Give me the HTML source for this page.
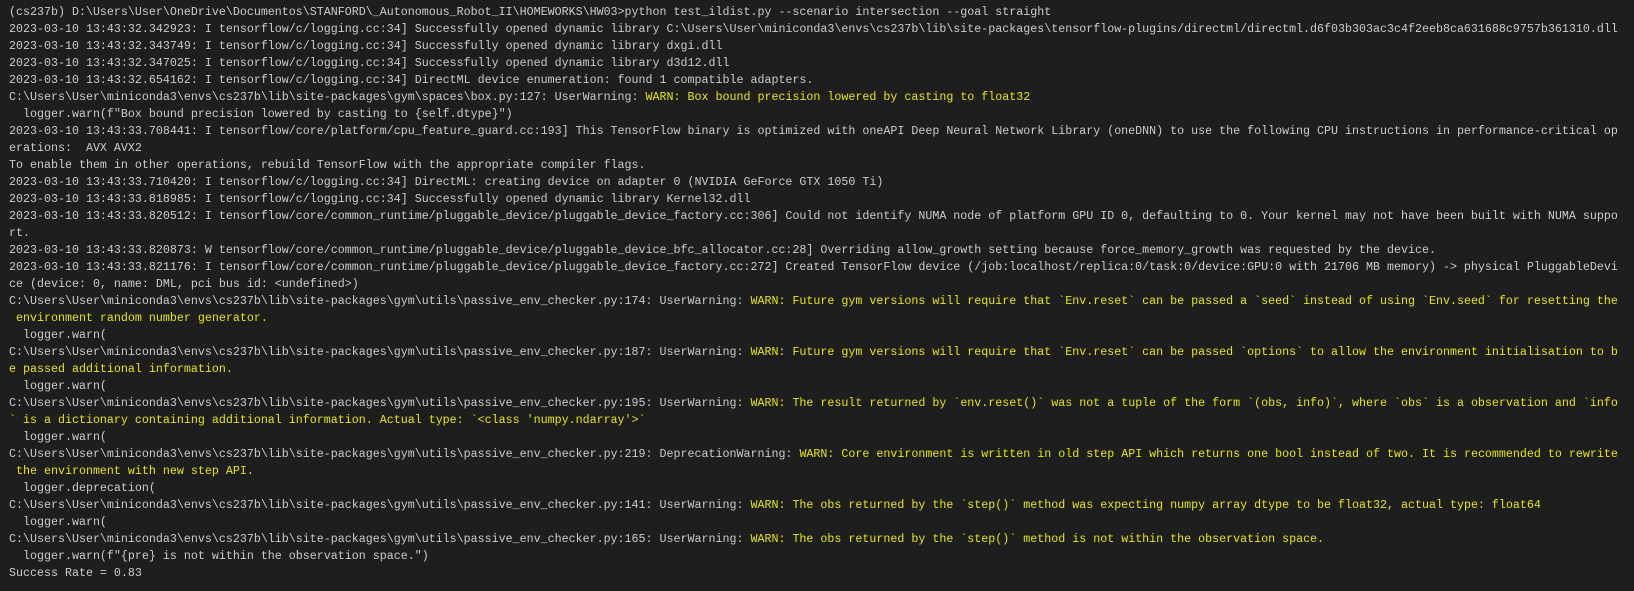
<!DOCTYPE html>
<html><head><meta charset="utf-8"><style>
html,body{margin:0;padding:0;background:#1e1e1e;width:1634px;height:591px;overflow:hidden}
pre{margin:0;padding:4px 0 0 9px;font-family:"Liberation Mono",monospace;font-size:11.67px;line-height:17px;color:#cccccc;white-space:pre}
.y{color:#e5e510}
</style></head><body><pre>(cs237b) D:\Users\User\OneDrive\Documentos\STANFORD\_Autonomous_Robot_II\HOMEWORKS\HW03&gt;python test_ildist.py --scenario intersection --goal straight
2023-03-10 13:43:32.342923: I tensorflow/c/logging.cc:34] Successfully opened dynamic library C:\Users\User\miniconda3\envs\cs237b\lib\site-packages\tensorflow-plugins/directml/directml.d6f03b303ac3c4f2eeb8ca631688c9757b361310.dll
2023-03-10 13:43:32.343749: I tensorflow/c/logging.cc:34] Successfully opened dynamic library dxgi.dll
2023-03-10 13:43:32.347025: I tensorflow/c/logging.cc:34] Successfully opened dynamic library d3d12.dll
2023-03-10 13:43:32.654162: I tensorflow/c/logging.cc:34] DirectML device enumeration: found 1 compatible adapters.
C:\Users\User\miniconda3\envs\cs237b\lib\site-packages\gym\spaces\box.py:127: UserWarning: <span class="y">WARN: Box bound precision lowered by casting to float32</span>
  logger.warn(f"Box bound precision lowered by casting to {self.dtype}")
2023-03-10 13:43:33.708441: I tensorflow/core/platform/cpu_feature_guard.cc:193] This TensorFlow binary is optimized with oneAPI Deep Neural Network Library (oneDNN) to use the following CPU instructions in performance-critical op
erations:  AVX AVX2
To enable them in other operations, rebuild TensorFlow with the appropriate compiler flags.
2023-03-10 13:43:33.710420: I tensorflow/c/logging.cc:34] DirectML: creating device on adapter 0 (NVIDIA GeForce GTX 1050 Ti)
2023-03-10 13:43:33.818985: I tensorflow/c/logging.cc:34] Successfully opened dynamic library Kernel32.dll
2023-03-10 13:43:33.820512: I tensorflow/core/common_runtime/pluggable_device/pluggable_device_factory.cc:306] Could not identify NUMA node of platform GPU ID 0, defaulting to 0. Your kernel may not have been built with NUMA suppo
rt.
2023-03-10 13:43:33.820873: W tensorflow/core/common_runtime/pluggable_device/pluggable_device_bfc_allocator.cc:28] Overriding allow_growth setting because force_memory_growth was requested by the device.
2023-03-10 13:43:33.821176: I tensorflow/core/common_runtime/pluggable_device/pluggable_device_factory.cc:272] Created TensorFlow device (/job:localhost/replica:0/task:0/device:GPU:0 with 21706 MB memory) -&gt; physical PluggableDevi
ce (device: 0, name: DML, pci bus id: &lt;undefined&gt;)
C:\Users\User\miniconda3\envs\cs237b\lib\site-packages\gym\utils\passive_env_checker.py:174: UserWarning: <span class="y">WARN: Future gym versions will require that `Env.reset` can be passed a `seed` instead of using `Env.seed` for resetting the
 environment random number generator.</span>
  logger.warn(
C:\Users\User\miniconda3\envs\cs237b\lib\site-packages\gym\utils\passive_env_checker.py:187: UserWarning: <span class="y">WARN: Future gym versions will require that `Env.reset` can be passed `options` to allow the environment initialisation to b
e passed additional information.</span>
  logger.warn(
C:\Users\User\miniconda3\envs\cs237b\lib\site-packages\gym\utils\passive_env_checker.py:195: UserWarning: <span class="y">WARN: The result returned by `env.reset()` was not a tuple of the form `(obs, info)`, where `obs` is a observation and `info
` is a dictionary containing additional information. Actual type: `&lt;class 'numpy.ndarray'&gt;`</span>
  logger.warn(
C:\Users\User\miniconda3\envs\cs237b\lib\site-packages\gym\utils\passive_env_checker.py:219: DeprecationWarning: <span class="y">WARN: Core environment is written in old step API which returns one bool instead of two. It is recommended to rewrite
 the environment with new step API.</span>
  logger.deprecation(
C:\Users\User\miniconda3\envs\cs237b\lib\site-packages\gym\utils\passive_env_checker.py:141: UserWarning: <span class="y">WARN: The obs returned by the `step()` method was expecting numpy array dtype to be float32, actual type: float64</span>
  logger.warn(
C:\Users\User\miniconda3\envs\cs237b\lib\site-packages\gym\utils\passive_env_checker.py:165: UserWarning: <span class="y">WARN: The obs returned by the `step()` method is not within the observation space.</span>
  logger.warn(f"{pre} is not within the observation space.")
Success Rate = 0.83
</pre></body></html>
